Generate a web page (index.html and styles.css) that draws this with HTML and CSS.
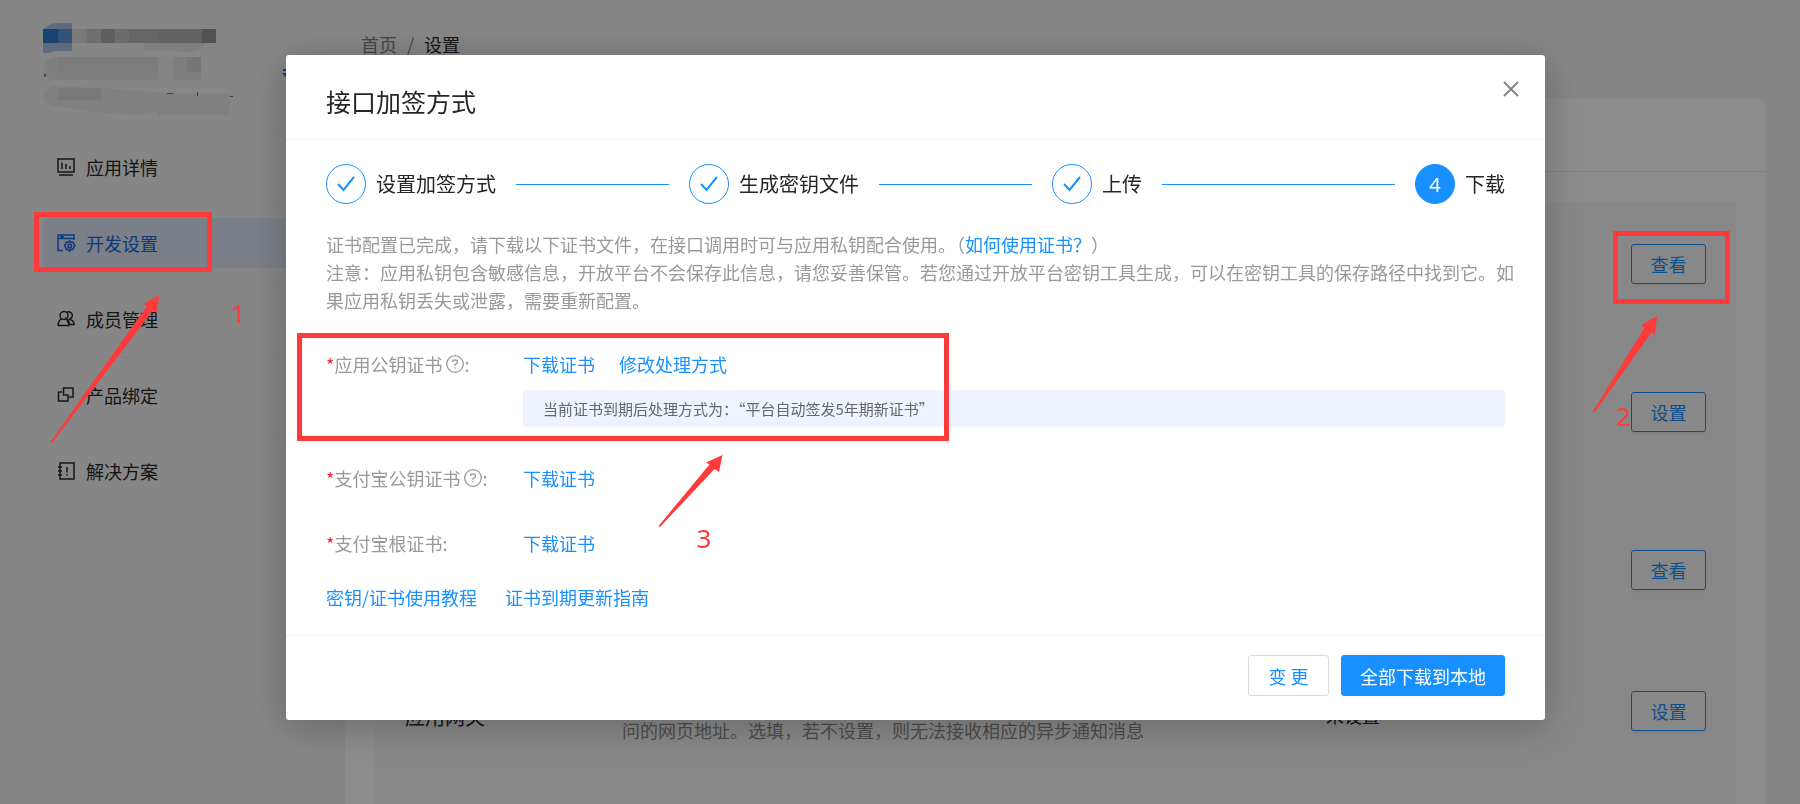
FILE: index.html
```html
<!DOCTYPE html>
<html lang="zh-CN">
<head>
<meta charset="utf-8">
<title>设置</title>
<link rel="stylesheet" href="styles.css">
</head>
<body>
<div class="page">
  <aside class="sidebar">
    <div class="account">
      <svg class="account-art" viewBox="0 0 200 102" width="200" height="102" aria-hidden="true">
        <path d="M0 10Q4 2 15 2H29V30H12L5 32H0Z" fill="#a9c4e2"/>
        <rect y="8" width="15" height="14" fill="#2a7bd0"/><rect x="15" y="8" width="14" height="14" fill="#5b98d8"/>
        <rect x="29" y="8" width="15" height="14" fill="#dcdcdc"/><rect x="44" y="8" width="14" height="14" fill="#c9cbca"/>
        <rect x="58" y="8" width="14" height="14" fill="#adadad"/><rect x="72" y="8" width="14" height="14" fill="#c4c4c4"/>
        <rect x="86" y="8" width="29" height="14" fill="#b8b9b8"/><rect x="115" y="8" width="15" height="14" fill="#b7b2af"/>
        <rect x="130" y="8" width="14" height="14" fill="#b0b2b6"/><rect x="144" y="8" width="15" height="14" fill="#b4b2b1"/>
        <rect x="159" y="8" width="14" height="14" fill="#98989b"/>
        <path d="M101 22H162Q158 31 146 31L101 29Z" fill="#e8e8e8"/>
        <path d="M10 36H115V59H10Q1 57 1 50Q1 39 10 36Z" fill="#e7e7e7"/>
        <rect x="15" y="36" width="100" height="15" fill="#e2e2e2"/>
        <rect x="115" y="36" width="15" height="23" fill="#f0f0f0"/>
        <rect x="130" y="36" width="28" height="23" fill="#e6e6e6"/><rect x="144" y="36" width="14" height="15" fill="#d6d6d6"/>
        <path d="M10 65L58 67L135 73H187V94H115V90L101 94L60 92L12 85Q1 82 0 77Q1 68 10 65Z" fill="#e9e9e9"/>
        <rect x="15" y="67" width="43" height="12" fill="#dedddc"/>
        <rect x="124" y="72" width="6" height="1" fill="#777"/><rect x="154" y="71" width="1" height="4" fill="#666"/><rect x="187" y="75" width="3" height="1" fill="#777"/><rect x="1" y="53" width="2" height="3" fill="#888"/>
      </svg>
      <svg class="switch" viewBox="0 0 16 16" width="16" height="16" aria-hidden="true"><path d="M1 6H14L10 2M15 10H2L6 14" fill="none" stroke="#1677ff" stroke-width="2"/></svg>
    </div>
    <nav class="menu">
      <a class="menu-item" href="#">
        <svg class="menu-icon" viewBox="0 0 18 18"><path d="M1 1H17V14H1ZM2 17H16M5 4.500V11M9 6V11M13 8V11"/></svg>应用详情</a>
      <a class="menu-item active" href="#">
        <svg class="menu-icon" viewBox="0 0 18 18"><path d="M17 6V1H1V16.500H6M1 4.500H17M3 2.800H7M12.700 6.800L14 8.300L16 8L16.800 10L18 11.800L16.800 13.500L16 15.500L14 15.300L12.700 17L11.400 15.300L9.400 15.500L8.600 13.500L7.500 11.800L8.600 10L9.400 8L11.400 8.300Z"/><circle cx="12.700" cy="11.900" r="1.800"/></svg>开发设置</a>
      <a class="menu-item" href="#">
        <svg class="menu-icon" viewBox="0 0 18 18"><circle cx="7" cy="5.500" r="4"/><path d="M1 15.500Q1 11 4.500 8.800M9.500 8.800Q12.500 11 12.500 15.500ZM1 15.500H12.500M9.500 2.500A3.700 3.700 0 1 1 12 9.200Q17 10 17 14.500H13"/></svg>成员管理</a>
      <a class="menu-item" href="#">
        <svg class="menu-icon" viewBox="0 0 18 18"><path d="M5 6H1.500V15H11V9H8M12 11H16V2H6.500V9H9"/></svg>产品绑定</a>
      <a class="menu-item" href="#">
        <svg class="menu-icon" viewBox="0 0 18 18"><path d="M3 1H17V17H3ZM1 5H5M1 9H5M1 13H5M10 5V10.500M10 12V13.500"/></svg>解决方案</a>
    </nav>
  </aside>
  <main class="content">
    <nav class="crumbs"><a href="#">首页</a><span>/</span><b>设置</b></nav>
    <section class="card">
      <div class="card-head"></div>
      <div class="panel">
        <div class="setting"><button class="ghost">查看</button></div>
        <div class="setting"><button class="ghost">设置</button></div>
        <div class="setting"><button class="ghost">查看</button></div>
        <div class="setting">
          <h3 class="setting-name">应用网关</h3>
          <p class="setting-desc">用于接收支付宝异步通知消息，需要传入可公网访<br>问的网页地址。选填，若不设置，则无法接收相应的异步通知消息</p>
          <span class="setting-state">未设置</span>
          <button class="ghost">设置</button>
        </div>
      </div>
    </section>
  </main>
</div>

<div class="mask">
  <div class="modal" role="dialog" aria-labelledby="dialog-title">
    <header class="modal-head">
      <h2 id="dialog-title">接口加签方式</h2>
      <button class="close" aria-label="关闭"><svg viewBox="0 0 16 16" width="16" height="16"><path d="M1 1L15 15M15 1L1 15" fill="none" stroke="#858585" stroke-width="2"/></svg></button>
    </header>
    <div class="modal-body">
      <ol class="steps">
        <li class="step"><span class="dot"><svg viewBox="0 0 20 20" width="20" height="20"><path d="M2 10L7.500 16L18 3"/></svg></span>设置加签方式</li>
        <li class="step"><span class="dot"><svg viewBox="0 0 20 20" width="20" height="20"><path d="M2 10L7.500 16L18 3"/></svg></span>生成密钥文件</li>
        <li class="step"><span class="dot"><svg viewBox="0 0 20 20" width="20" height="20"><path d="M2 10L7.500 16L18 3"/></svg></span>上传</li>
        <li class="step current"><span class="dot">4</span>下载</li>
      </ol>
      <p class="intro">证书配置已完成，请下载以下证书文件，在接口调用时可与应用私钥配合使用。（<a href="#">如何使用证书？</a>）<br>注意：应用私钥包含敏感信息，开放平台不会保存此信息，请您妥善保管。若您通过开放平台密钥工具生成，可以在密钥工具的保存路径中找到它。如<br>果应用私钥丢失或泄露，需要重新配置。</p>
      <div class="certs">
        <div class="cert">
          <div class="label"><i>*</i>应用公钥证书<svg class="help" viewBox="0 0 18 18"><circle cx="9" cy="9" r="8.300"/><path d="M6.500 7Q6.500 4.800 9 4.800T11.500 7Q11.500 8.300 9 9.600V10.800M9 12.200V13.500"/></svg>:</div>
          <div class="value">
            <div class="links"><a href="#">下载证书</a><a href="#">修改处理方式</a></div>
            <div class="notice">当前证书到期后处理方式为：“平台自动签发5年期新证书”</div>
          </div>
        </div>
        <div class="cert">
          <div class="label"><i>*</i>支付宝公钥证书<svg class="help" viewBox="0 0 18 18"><circle cx="9" cy="9" r="8.300"/><path d="M6.500 7Q6.500 4.800 9 4.800T11.500 7Q11.500 8.300 9 9.600V10.800M9 12.200V13.500"/></svg>:</div>
          <div class="value"><div class="links"><a href="#">下载证书</a></div></div>
        </div>
        <div class="cert">
          <div class="label"><i>*</i>支付宝根证书:</div>
          <div class="value"><div class="links"><a href="#">下载证书</a></div></div>
        </div>
      </div>
      <div class="guides"><a href="#">密钥/证书使用教程</a><a href="#">证书到期更新指南</a></div>
    </div>
    <footer class="modal-foot">
      <button class="btn">变 更</button>
      <button class="btn primary">全部下载到本地</button>
    </footer>
  </div>
</div>

<svg class="marks" viewBox="0 0 1800 804" width="1800" height="804">
  <g fill="none" stroke="#ff3a3a" stroke-width="5">
    <rect x="36.500" y="214.500" width="173" height="55"/>
    <rect x="1615.500" y="233.500" width="112" height="68"/>
    <rect x="299.500" y="335.500" width="647" height="103"/>
  </g>
  <g fill="#ff3a3a">
    <path d="M159 295L143 304L147 306L50.500 442L52 443L153 310.500L157 313Z"/>
    <path d="M1657 316L1641 325L1644.500 327.500L1593 411.500L1594.500 412.500L1651.500 332.500L1655 334.500Z"/>
    <path d="M722.500 455L706 462.500L709.500 464.500L658.500 526L660 527L714.500 469L719 472Z"/>
    <text x="238" y="323">1</text>
    <text x="1623" y="426">2</text>
    <text x="704" y="548">3</text>
  </g>
</svg>
</body>
</html>
```

FILE: styles.css
```css
* { box-sizing: border-box; }
body, h2, h3, p, ol { margin: 0; padding: 0; }
body {
  font: 18px/28px "Noto Sans CJK SC", "Noto Sans", sans-serif;
  color: #262626;
  background: #f4f4f4;
}
a { color: #1890ff; text-decoration: none; }
button { font: inherit; cursor: pointer; }

.page { display: flex; height: 100vh; overflow: hidden; }
.sidebar { width: 345px; flex: none; padding: 18px 0 0 43px; }
.account { display: flex; height: 111px; align-items: flex-start; }
.account-art { flex: none; margin-top: 3px; }
.switch { flex: none; margin: 46px 0 0 39px; }
.menu { display: grid; }
.menu-item {
  position: relative;
  display: flex;
  align-items: center;
  gap: 11px;
  height: 50px;
  margin: 13px 0;
  padding-left: 14px;
  color: #262626;
  border-radius: 6px;
}
.menu-item::before {
  content: "";
  position: absolute;
  inset: -13px 0 auto;
  border-top: 1px solid #eee;
}
.menu-item.active { color: #1467e6; background: #dfe8f7; }
.menu-icon { width: 18px; height: 18px; fill: none; stroke: currentColor; stroke-width: 1.5; overflow: visible; }

.content { flex: 1; padding: 30px 34px 0 0; display: flex; flex-direction: column; }
.crumbs { display: flex; gap: 10px; padding-left: 16px; }
.crumbs a, .crumbs span { color: #7d7d7d; }
.crumbs b { font-weight: 400; }
.card { flex: 1; display: flex; flex-direction: column; margin-top: 40px; background: #fff; border-radius: 10px 10px 0 0; padding: 0 30px; }
.card-head { height: 74px; margin: 0 -30px 30px; border-bottom: 1px solid #ececec; }
.panel { flex: 1; background: #f8f8f8; padding: 0 30px; display: grid; grid-template-rows: 148px 158px 141px 1fr; }
.setting { display: flex; align-items: flex-start; padding-top: 42px; }
.ghost {
  flex: none;
  width: 75px;
  height: 40px;
  margin-left: auto;
  padding: 0;
  line-height: 36px;
  color: #1890ff;
  background: none;
  border: 1px solid #1890ff;
  border-radius: 3px;
  box-shadow: 0 2px 2px rgba(0, 0, 0, .05);
}
.setting-name { width: 217px; font-size: 20px; font-weight: 400; padding-top: 12px; }
.setting-desc { width: 530px; line-height: 26px; color: #8c8c8c; }
.setting-state { margin-left: 174px; padding-top: 10px; }

.mask { position: fixed; inset: 0; background: rgba(0, 0, 0, .45); padding: 55px 255px 0 286px; }
.modal { background: #fff; border-radius: 3px; box-shadow: 0 6px 40px rgba(0, 0, 0, .25); }
.modal-head {
  display: flex;
  justify-content: space-between;
  align-items: center;
  height: 85px;
  padding: 8px 26px 0 40px;
  border-bottom: 1px solid #f0f0f0;
}
.modal-head h2 { font-size: 25px; line-height: 40px; font-weight: 400; }
.close { display: flex; padding: 0; border: 0; background: none; margin-bottom: 24px; }
.modal-body { padding: 24px 40px; }
.steps { display: flex; list-style: none; }
.step { display: flex; align-items: center; flex: 1; font-size: 20px; white-space: nowrap; }
.step::after { content: ""; flex: 1; height: 1px; margin: 0 20px; background: #1890ff; }
.step.current { flex: none; }
.step.current::after { display: none; }
.dot {
  display: flex;
  align-items: center;
  justify-content: center;
  width: 40px;
  height: 40px;
  margin-right: 10px;
  border: 1px solid #1890ff;
  border-radius: 50%;
}
.dot svg { fill: none; stroke: #1890ff; stroke-width: 2; }
.current .dot { background: #1890ff; color: #fff; font: 20px "Noto Sans", sans-serif; }
.intro { margin-top: 26px; color: #999; white-space: nowrap; }
.certs { margin-top: 36px; display: grid; gap: 37px; }
.cert { display: flex; }
.label { display: flex; align-items: center; width: 197px; height: 28px; color: #999; }
.label i { font-style: normal; color: #f5222d; }
.help { width: 18px; height: 18px; margin-left: 4px; fill: none; stroke: #999; stroke-width: 1.3; }
.value { flex: 1; }
.links { display: flex; gap: 24px; }
.notice { margin-top: 12px; padding: 5px 20px; font-size: 15px; line-height: 27px; color: #666; background: #edf4ff; border-radius: 4px; }
.guides { display: flex; gap: 28px; margin-top: 26px; }
.modal-foot { display: flex; justify-content: flex-end; gap: 12px; padding: 19px 40px 24px; border-top: 1px solid #f0f0f0; }
.btn { min-width: 81px; height: 41px; padding: 0 18px; line-height: 36px; color: #1890ff; background: #fff; border: 1px solid #d9d9d9; border-radius: 3px; }
.btn.primary { color: #fff; background: #1890ff; border-color: #1890ff; }

.marks { position: absolute; top: 0; left: 0; pointer-events: none; }
.marks text { font: 26px "Noto Sans", sans-serif; text-anchor: middle; }
```
